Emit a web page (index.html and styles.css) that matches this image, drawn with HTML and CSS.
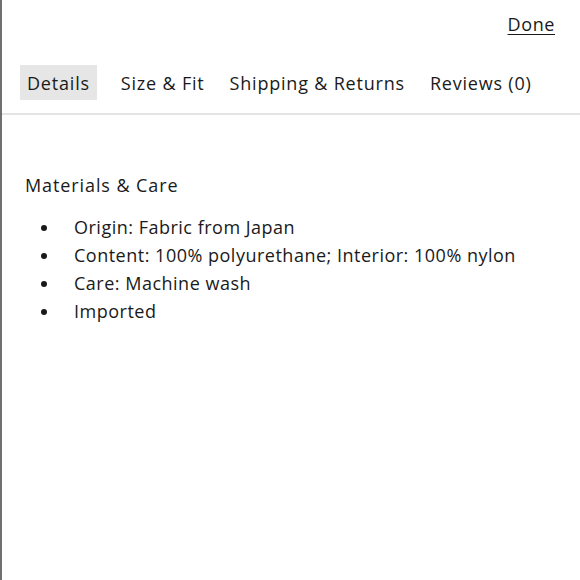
FILE: index.html
```html
<!DOCTYPE html>
<html>
<head>
<meta charset="utf-8">
<link rel="stylesheet" href="styles.css">
</head>
<body>
<div class="page">
  <div class="top">
    <a class="done" href="#">Done</a>
  </div>
  <nav class="tabs">
    <span class="tab active">Details</span>
    <span class="tab">Size &amp; Fit</span>
    <span class="tab">Shipping &amp; Returns</span>
    <span class="tab">Reviews (0)</span>
  </nav>
  <section class="content">
    <h2 class="heading">Materials &amp; Care</h2>
    <ul class="list">
      <li>Origin: Fabric from Japan</li>
      <li>Content: 100% polyurethane; Interior: 100% nylon</li>
      <li>Care: Machine wash</li>
      <li>Imported</li>
    </ul>
  </section>
</div>
</body>
</html>
```
FILE: styles.css
```css
html, body {
  margin: 0;
  padding: 0;
  background: #fff;
}
body {
  font-family: "Open Sans", "Liberation Sans", sans-serif;
  color: #1a1a1a;
}
.page {
  border-left: 2px solid #6f6f6f;
  min-height: 580px;
  box-sizing: border-box;
}
.top {
  display: flex;
  justify-content: flex-end;
  padding: 12px 25px 0 0;
  height: 30px;
}
.done {
  color: #1a1a1a;
  font-size: 18px;
  letter-spacing: 0.6px;
  text-decoration: underline;
  text-underline-offset: 3px;
}
.tabs {
  display: flex;
  align-items: center;
  gap: 11px;
  margin-top: 23px;
  padding: 0 0 13px 18px;
  border-bottom: 2px solid #e4e4e4;
}
.tab {
  font-size: 18px;
  letter-spacing: 0.8px;
  padding: 8px 7px 6px;
  line-height: 21px;
}
.tab.active {
  background: #e6e6e6;
  margin-right: 6px;
}
.content {
  padding: 58px 0 0 23px;
}
.heading {
  margin: 0;
  font-weight: normal;
  font-size: 18px;
  letter-spacing: 0.9px;
  line-height: 24px;
}
.list {
  margin: 16px 0 0;
  padding: 0 0 0 49px;
  list-style: none;
  font-size: 18px;
  letter-spacing: 0.5px;
  line-height: 28px;
}
.list li {
  position: relative;
}
.list li::before {
  content: "";
  position: absolute;
  left: -33px;
  top: 12px;
  width: 6px;
  height: 6px;
  border-radius: 50%;
  background: #1a1a1a;
}
```
